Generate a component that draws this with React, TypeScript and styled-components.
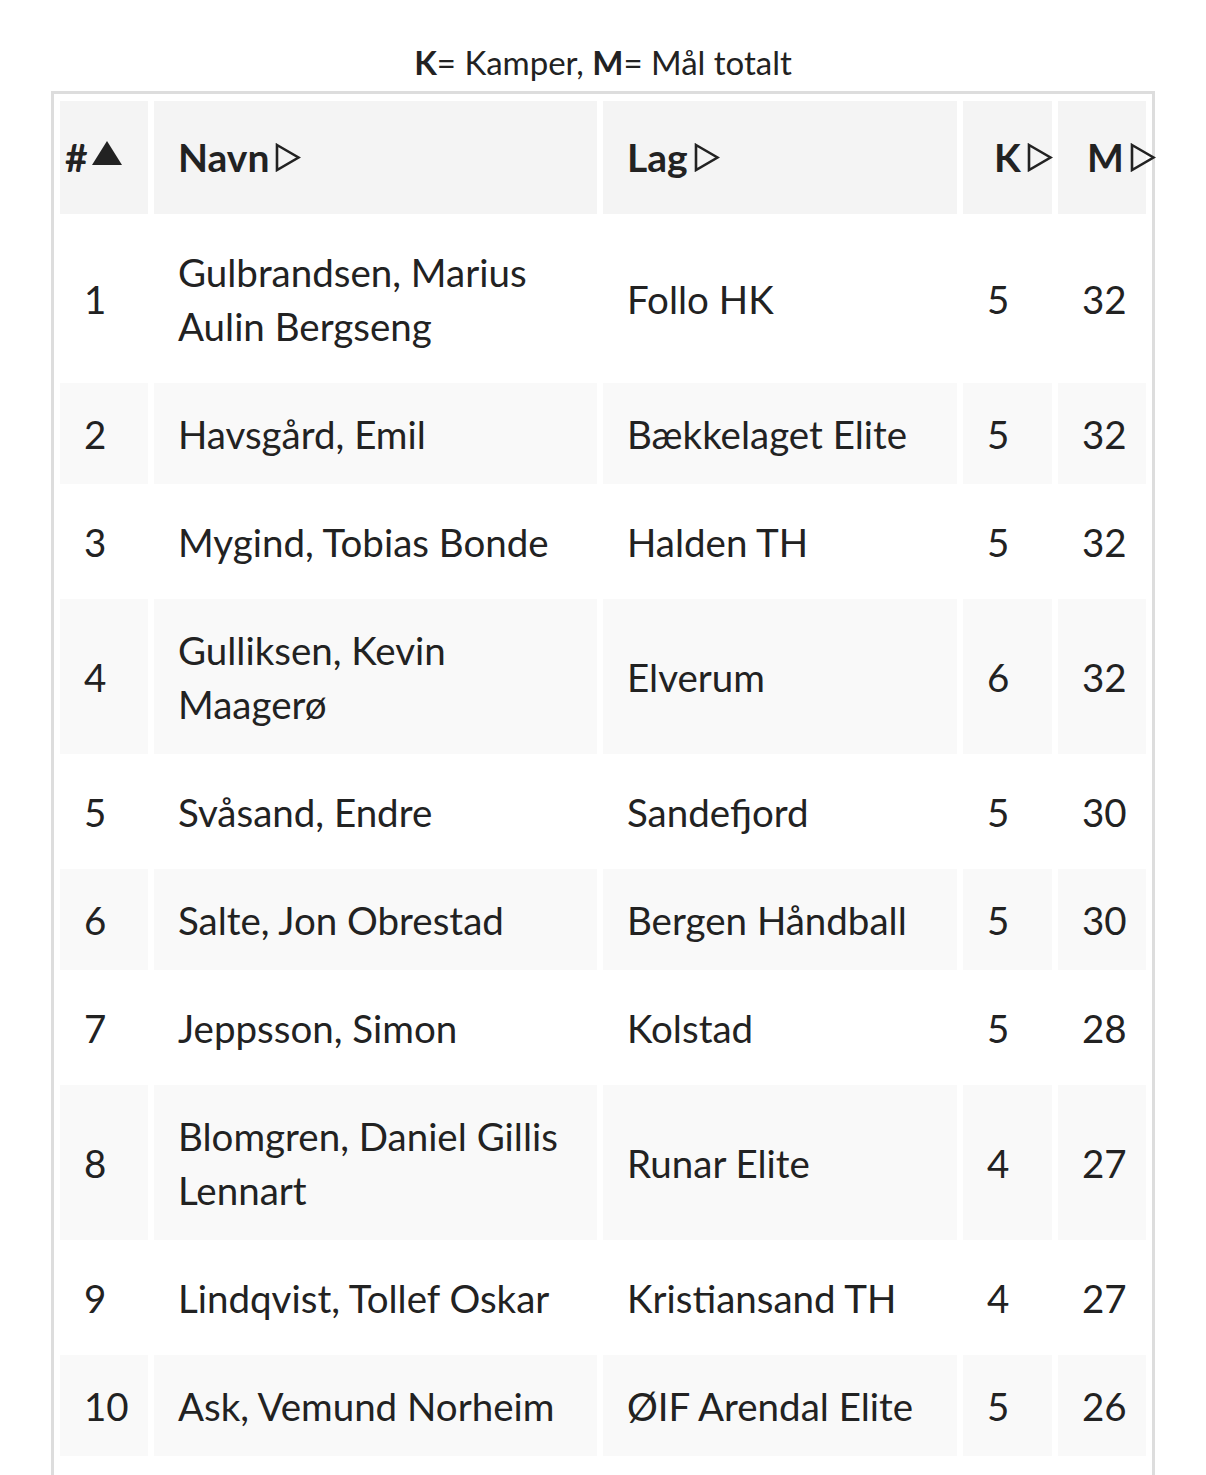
import type { FC } from "react";
import styled, { createGlobalStyle } from "styled-components";

const GlobalStyle = createGlobalStyle`
  html, body {
    margin: 0;
    background: #ffffff;
  }
  body {
    font-family: Lato, "Noto Sans", "Liberation Sans", sans-serif;
    color: #222222;
    overflow: hidden;
  }
`;

const Page = styled.main`
  height: 1475px;
  overflow: hidden;
  padding-top: 35px;
  box-sizing: border-box;
`;

const Legend = styled.p`
  margin: 0 0 2px;
  text-align: center;
  font-size: 33px;
  line-height: 54px;

  b {
    font-weight: 700;
  }
`;

const Table = styled.table`
  width: 1104px;
  margin: 0 auto;
  table-layout: fixed;
  border: 3px solid #dddddd;
  border-collapse: separate;
  border-spacing: 6px 7px;
  padding-bottom: 60px;
`;

const Th = styled.th<{ $pad: number }>`
  background: #f4f4f4;
  padding: 29px 0 30px ${(p) => p.$pad}px;
  text-align: left;
  font-size: 39px;
  line-height: 54px;
  font-weight: 700;
  white-space: nowrap;
  overflow: visible;
`;

const HeadLabel = styled.span`
  display: inline-flex;
  align-items: center;
  gap: 6px;
`;

const Row = styled.tr<{ $even: boolean }>`
  background: ${(p) => (p.$even ? "#f9f9f9" : "transparent")};
`;

const Td = styled.td`
  padding: 24px 20px 23px 24px;
  font-size: 38.5px;
  line-height: 54px;
  vertical-align: middle;
`;

const SortIcon: FC<{ active?: boolean }> = ({ active }) =>
  active ? (
    <svg width="30" height="24" viewBox="0 0 30 24" style={{ marginTop: -8, marginLeft: -2 }}>
      <polygon points="15,0 30,24 0,24" fill="#222" />
    </svg>
  ) : (
    <svg width="26" height="29" viewBox="0 0 26 29">
      <polygon
        points="2,2 23.5,14.5 2,27"
        fill="none"
        stroke="#222"
        strokeWidth="2.6"
        strokeLinejoin="miter"
      />
    </svg>
  );

const columns = [
  { label: "#", width: 88, pad: 5, active: true },
  { label: "Navn", width: 443, pad: 24 },
  { label: "Lag", width: 354, pad: 24 },
  { label: "K", width: 89, pad: 31 },
  { label: "M", width: 88, pad: 29 },
];

const scorers = [
  { name: "Gulbrandsen, Marius Aulin Bergseng", team: "Follo HK", k: 5, m: 32 },
  { name: "Havsgård, Emil", team: "Bækkelaget Elite", k: 5, m: 32 },
  { name: "Mygind, Tobias Bonde", team: "Halden TH", k: 5, m: 32 },
  { name: "Gulliksen, Kevin Maagerø", team: "Elverum", k: 6, m: 32 },
  { name: "Svåsand, Endre", team: "Sandefjord", k: 5, m: 30 },
  { name: "Salte, Jon Obrestad", team: "Bergen Håndball", k: 5, m: 30 },
  { name: "Jeppsson, Simon", team: "Kolstad", k: 5, m: 28 },
  { name: "Blomgren, Daniel Gillis Lennart", team: "Runar Elite", k: 4, m: 27 },
  { name: "Lindqvist, Tollef Oskar", team: "Kristiansand TH", k: 4, m: 27 },
  { name: "Ask, Vemund Norheim", team: "ØIF Arendal Elite", k: 5, m: 26 },
];

const App: FC = () => {
  return (
    <Page>
      <GlobalStyle />
      <Legend>
        <b>K</b>= Kamper, <b>M</b>= Mål totalt
      </Legend>

      <Table>
        <colgroup>
          {columns.map((c) => (
            <col key={c.label} style={{ width: c.width }} />
          ))}
        </colgroup>
        <thead>
          <tr>
            {columns.map((c) => (
              <Th key={c.label} $pad={c.pad}>
                <HeadLabel>
                  {c.label}
                  <SortIcon active={c.active} />
                </HeadLabel>
              </Th>
            ))}
          </tr>
        </thead>
        <tbody>
          {scorers.map((s, i) => (
            <Row key={s.name} $even={i % 2 === 1}>
              <Td>{i + 1}</Td>
              <Td>{s.name}</Td>
              <Td>{s.team}</Td>
              <Td>{s.k}</Td>
              <Td>{s.m}</Td>
            </Row>
          ))}
        </tbody>
      </Table>
    </Page>
  );
};

export default App;
